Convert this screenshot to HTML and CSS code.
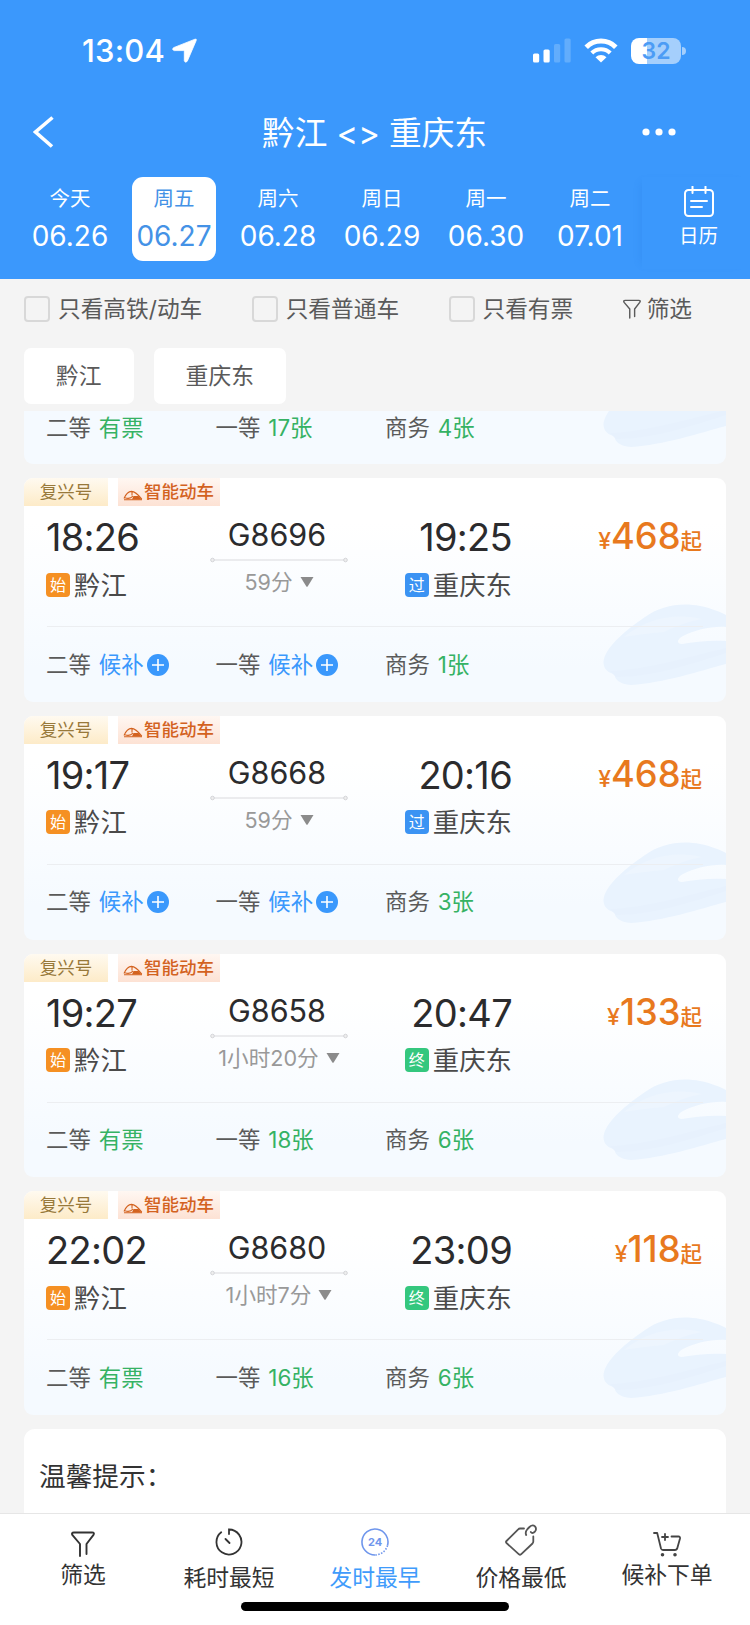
FILE: index.html
```html
<!DOCTYPE html>
<html lang="zh-CN">
<head>
   <meta charset="UTF-8">
   <meta name="viewport" content="width=device-width, initial-scale=1.0">
   <title>黔江 - 重庆东</title>
   <link rel="stylesheet" href="styles.css">
</head>
<body>
   <!-- shared icons -->
   <svg class="icon-defs" width="0" height="0">
      <symbol id="train-bg" viewBox="0 0 124 84">
         <path d="M2 56C6 42 24 27 43 14C58 3 79 -1 98 3C109 5 118 9 124 12V24C109 23 93 27 81 33C75 36 74 41 80 41C93 39 108 37 124 38V61C98 68 61 80 29 82C16 81 12 75 13 71C4 70 0 63 2 56Z" fill="#e9f3fe"/>
         <path d="M22 34C42 17 70 9 100 16C88 18 74 23 62 29C48 30 34 32 22 34Z" fill="#edf5fe"/>
         <path d="M8 68C42 67 83 55 124 45V50C84 63 48 74 14 74Z" fill="#e7f1fd"/>
      </symbol>
      <symbol id="train" viewBox="0 0 20 12">
         <path d="M1 9.5C2.5 6 5 2.6 8.5 2.4C12.5 2.6 15.5 6 18.8 10M1 10.8H19M2 8.8C5 9.8 8 9.5 10 7M9 2.5V6.5" fill="none" stroke="currentColor" stroke-width="1.1"/>
         <path d="M10.5 7H15.5L18.8 10.5H9Z" fill="currentColor"/>
      </symbol>
      <symbol id="route" viewBox="0 0 138 6">
         <path d="M4 3H134" stroke="#d9dadd" stroke-width="1.2"/>
         <circle cx="2.5" cy="3" r="1.8" fill="#eee" stroke="#d3d4d8" stroke-width="1"/>
         <circle cx="135.5" cy="3" r="1.8" fill="#eee" stroke="#d3d4d8" stroke-width="1"/>
      </symbol>
      <symbol id="down" viewBox="0 0 14 10">
         <path d="M0.5 0H13.5L7.8 9.2Q7 10.2 6.2 9.2Z" fill="#8b8b8b"/>
      </symbol>
      <symbol id="plus" viewBox="0 0 22 22">
         <circle cx="11" cy="11" r="11" fill="#3a98fc"/>
         <path d="M11 5V17M5 11H17" stroke="#fff" stroke-width="1.6"/>
      </symbol>
      <symbol id="funnel" viewBox="0 0 24 26">
         <path d="M9 25V13L1.5 4.2Q0 1.5 3 1.5H21Q24 1.5 22.3 4.2L15.5 13V23" fill="none" stroke="currentColor" stroke-width="1.9" stroke-linecap="round" stroke-linejoin="round"/>
      </symbol>
   </svg>

   <header>
      <div class="status-bar">
         <span class="clock">13:04</span>
         <svg class="location" width="25" height="25" viewBox="0 0 25 25">
            <path d="M23 1.2Q24.8 .6 24.2 2.5L15.3 23.2Q13.2 25.5 12.3 22.8V13.2Q12.3 12.6 11.6 12.6H2.2Q-.6 11.7 1.5 9.7Z" fill="#fff" stroke="#fff" stroke-width=".8"/>
         </svg>
         <svg class="signal" width="38" height="25" viewBox="0 0 38 25">
            <rect x="0" y="15.5" width="6.2" height="9" rx="1.6" fill="#fff"/>
            <rect x="10.5" y="11.5" width="6.2" height="13" rx="1.6" fill="#fff"/>
            <rect x="21" y="6" width="6.2" height="18.5" rx="1.6" fill="#62adfc"/>
            <rect x="31.5" y="0.5" width="6.2" height="24" rx="1.6" fill="#62adfc"/>
         </svg>
         <svg class="wifi" width="34" height="25" viewBox="0 0 34 25">
            <path d="M2.2 9.2A21 21 0 0 1 31.8 9.2" fill="none" stroke="#fff" stroke-width="5"/>
            <path d="M7.8 15A13.2 13.2 0 0 1 26.2 15" fill="none" stroke="#fff" stroke-width="4.2"/>
            <path d="M17 24.6L11.5 19.2A8 8 0 0 1 22.5 19.2Z" fill="#fff"/>
         </svg>
         <div class="battery"><span>32</span></div>
      </div>

      <div class="title-bar">
         <svg width="22" height="32" viewBox="0 0 22 32">
            <path d="M19.5 1.5L2.5 16L19 30.5" fill="none" stroke="#fff" stroke-width="3.6"/>
         </svg>
         <h1>黔江 &lt;&gt; 重庆东</h1>
         <svg width="34" height="8" viewBox="0 0 34 8">
            <circle cx="4" cy="4" r="3.6" fill="#fff"/>
            <circle cx="17" cy="4" r="3.6" fill="#fff"/>
            <circle cx="30" cy="4" r="3.6" fill="#fff"/>
         </svg>
      </div>

      <div class="dates">
         <div class="day"><span>今天</span><b>06.26</b></div>
         <div class="day active"><span>周五</span><b>06.27</b></div>
         <div class="day"><span>周六</span><b>06.28</b></div>
         <div class="day"><span>周日</span><b>06.29</b></div>
         <div class="day"><span>周一</span><b>06.30</b></div>
         <div class="day"><span>周二</span><b>07.01</b></div>
         <div class="calendar">
            <svg width="32" height="32" viewBox="0 0 32 32" fill="none" stroke="#fff" stroke-width="2">
               <rect x="2" y="4" width="28" height="26" rx="3.5"/>
               <path d="M9.5 0.5V7M22.5 0.5V7M8 15H24M8 21H19" stroke-linecap="round"/>
            </svg>
            <span>日历</span>
         </div>
      </div>
   </header>

   <div class="filters">
      <label class="check"><i></i>只看高铁/动车</label>
      <label class="check"><i></i>只看普通车</label>
      <label class="check"><i></i>只看有票</label>
      <div class="filter-link"><svg width="18" height="20"><use href="#funnel"/></svg>筛选</div>
   </div>

   <div class="chips">
      <div class="chip">黔江</div>
      <div class="chip">重庆东</div>
   </div>

   <main class="list">
      <section class="card card-cut">
         <svg class="train-bg" width="124" height="84"><use href="#train-bg"/></svg>
         <div class="seats">
            <div>二等<em>有票</em></div>
            <div>一等<em>17张</em></div>
            <div>商务<em>4张</em></div>
         </div>
      </section>

      <section class="card">
         <svg class="train-bg" width="124" height="84"><use href="#train-bg"/></svg>
         <div class="tags"><span class="tag gold">复兴号</span><span class="tag smart"><svg width="20" height="12"><use href="#train"/></svg>智能动车</span></div>
         <div class="trip">
            <div class="from"><div class="time">18:26</div><div class="station"><i class="mark start">始</i>黔江</div></div>
            <div class="train"><div class="number">G8696</div><svg width="138" height="6"><use href="#route"/></svg><div class="duration">59分<svg width="14" height="10"><use href="#down"/></svg></div></div>
            <div class="to"><div class="time">19:25</div><div class="station"><i class="mark pass">过</i>重庆东</div></div>
            <div class="price"><small>¥</small><b>468</b><span>起</span></div>
         </div>
         <div class="seats">
            <div class="wait">二等<em>候补</em><svg width="22" height="22"><use href="#plus"/></svg></div>
            <div class="wait">一等<em>候补</em><svg width="22" height="22"><use href="#plus"/></svg></div>
            <div>商务<em>1张</em></div>
         </div>
      </section>

      <section class="card">
         <svg class="train-bg" width="124" height="84"><use href="#train-bg"/></svg>
         <div class="tags"><span class="tag gold">复兴号</span><span class="tag smart"><svg width="20" height="12"><use href="#train"/></svg>智能动车</span></div>
         <div class="trip">
            <div class="from"><div class="time">19:17</div><div class="station"><i class="mark start">始</i>黔江</div></div>
            <div class="train"><div class="number">G8668</div><svg width="138" height="6"><use href="#route"/></svg><div class="duration">59分<svg width="14" height="10"><use href="#down"/></svg></div></div>
            <div class="to"><div class="time">20:16</div><div class="station"><i class="mark pass">过</i>重庆东</div></div>
            <div class="price"><small>¥</small><b>468</b><span>起</span></div>
         </div>
         <div class="seats">
            <div class="wait">二等<em>候补</em><svg width="22" height="22"><use href="#plus"/></svg></div>
            <div class="wait">一等<em>候补</em><svg width="22" height="22"><use href="#plus"/></svg></div>
            <div>商务<em>3张</em></div>
         </div>
      </section>

      <section class="card">
         <svg class="train-bg" width="124" height="84"><use href="#train-bg"/></svg>
         <div class="tags"><span class="tag gold">复兴号</span><span class="tag smart"><svg width="20" height="12"><use href="#train"/></svg>智能动车</span></div>
         <div class="trip">
            <div class="from"><div class="time">19:27</div><div class="station"><i class="mark start">始</i>黔江</div></div>
            <div class="train"><div class="number">G8658</div><svg width="138" height="6"><use href="#route"/></svg><div class="duration">1小时20分<svg width="14" height="10"><use href="#down"/></svg></div></div>
            <div class="to"><div class="time">20:47</div><div class="station"><i class="mark end">终</i>重庆东</div></div>
            <div class="price"><small>¥</small><b>133</b><span>起</span></div>
         </div>
         <div class="seats">
            <div>二等<em>有票</em></div>
            <div>一等<em>18张</em></div>
            <div>商务<em>6张</em></div>
         </div>
      </section>

      <section class="card">
         <svg class="train-bg" width="124" height="84"><use href="#train-bg"/></svg>
         <div class="tags"><span class="tag gold">复兴号</span><span class="tag smart"><svg width="20" height="12"><use href="#train"/></svg>智能动车</span></div>
         <div class="trip">
            <div class="from"><div class="time">22:02</div><div class="station"><i class="mark start">始</i>黔江</div></div>
            <div class="train"><div class="number">G8680</div><svg width="138" height="6"><use href="#route"/></svg><div class="duration">1小时7分<svg width="14" height="10"><use href="#down"/></svg></div></div>
            <div class="to"><div class="time">23:09</div><div class="station"><i class="mark end">终</i>重庆东</div></div>
            <div class="price"><small>¥</small><b>118</b><span>起</span></div>
         </div>
         <div class="seats">
            <div>二等<em>有票</em></div>
            <div>一等<em>16张</em></div>
            <div>商务<em>6张</em></div>
         </div>
      </section>

      <section class="tips">温馨提示：</section>
   </main>

   <footer>
      <nav class="tabs">
         <div class="tab short">
            <svg width="24" height="26"><use href="#funnel"/></svg>
            <span>筛选</span>
         </div>
         <div class="tab">
            <svg width="28" height="28" viewBox="0 0 28 28" fill="none" stroke="currentColor" stroke-width="1.8">
               <path d="M14 6V1.5A12.5 12.5 0 1 1 6.2 4.2M10.5 11L14.5 15" stroke-linecap="round"/>
            </svg>
            <span>耗时最短</span>
         </div>
         <div class="tab active">
            <svg width="28" height="28" viewBox="0 0 28 28" fill="none" stroke="#6f96ec" stroke-width="1.6">
               <path d="M14 27A13 13 0 1 1 26.5 17.5"/>
               <path d="M26.5 17.5A13 13 0 0 1 14 27" stroke-dasharray="1.5 1.5"/>
               <text x="14" y="18" text-anchor="middle">24</text>
            </svg>
            <span>发时最早</span>
         </div>
         <div class="tab">
            <svg width="32" height="32" viewBox="0 0 32 32" fill="none" stroke="#555" stroke-width="1.8" stroke-linecap="round" stroke-linejoin="round">
               <path d="M19 4.5H15Q14 4.5 13.2 5.4L1.5 17Q.5 18 1.5 19L14 30.3Q15 31.1 16 30.3L27.5 19.5Q28.3 18.6 28.3 17.5V12.5"/>
               <path d="M21.2 11Q19.8 8 22.5 5L24.5 3Q27.5 .2 30 2.4Q32 5 30 7.5L28.5 8.7Q26.8 9.5 25.8 8"/>
            </svg>
            <span>价格最低</span>
         </div>
         <div class="tab short">
            <svg width="28" height="26" viewBox="0 0 28 26" fill="none" stroke="#444" stroke-width="1.8" stroke-linecap="round" stroke-linejoin="round">
               <path d="M1 2H4.2L8 17.5Q8.5 19 10 19H22Q23.5 19 24.2 17.5L27 7.5Q27.3 5.5 25.5 5.5H18.5M12 3V9M9 6H15"/>
               <circle cx="9.5" cy="23.7" r="0.9" fill="#444"/>
               <circle cx="22" cy="23.7" r="0.9" fill="#444"/>
            </svg>
            <span>候补下单</span>
         </div>
      </nav>
      <div class="home-bar"></div>
   </footer>
</body>
</html>
```
FILE: styles.css
```css
* {
   box-sizing: border-box;
}

body {
   margin: 0;
   width: 750px;
   height: 1625px;
   overflow: hidden;
   display: flex;
   flex-direction: column;
   background-color: #f4f4f4;
   font-family: Inter, "Noto Sans CJK SC", sans-serif;
   color: #5a5a5a;
}

svg {
   display: block;
   flex-shrink: 0;
}

.icon-defs {
   position: absolute;
}

i, em {
   font-style: normal;
}

header {
   height: 279px;
   flex-shrink: 0;
   background-color: #3b98fc;
   color: #fff;
}

/* Status bar */
.status-bar {
   height: 100px;
   padding: 1px 64px 0 82px;
   display: flex;
   align-items: center;
}

.clock {
   width: 84px;
   font-size: 31px;
   font-weight: 500;
   letter-spacing: 0.2px;
}

.location {
   margin-left: 6px;
}

.signal {
   margin-left: auto;
}

.wifi {
   margin: 0 13px;
}

.battery {
   position: relative;
   width: 50px;
   height: 26px;
   margin-right: 5px;
   border-radius: 8px;
   background: linear-gradient(90deg, #fff 16px, #a5cffc 16px);
   color: #4c9cf5;
   font-size: 23px;
   font-weight: 600;
   line-height: 26px;
   text-align: center;
}

.battery::after {
   content: "";
   position: absolute;
   right: -5px;
   top: 9px;
   width: 4px;
   height: 8px;
   border-radius: 0 4px 4px 0;
   background-color: #a5cffc;
}

/* Title */
.title-bar {
   height: 64px;
   padding: 0 74px 0 33px;
   display: flex;
   align-items: center;
   justify-content: space-between;
}

.title-bar h1 {
   margin: 2px 0 0 52px;
   font-size: 32.7px;
   font-weight: 400;
   line-height: 40px;
}

/* Dates */
.dates {
   height: 115px;
   padding: 13px 0 0 18px;
   display: flex;
}

.day {
   width: 84px;
   height: 84px;
   margin: 0 10px;
   padding-top: 8px;
   border-radius: 11px;
   display: flex;
   flex-direction: column;
   align-items: center;
}

.day span {
   font-size: 20.5px;
   line-height: 28px;
}

.day b {
   margin-top: 6px;
   font-size: 28px;
   font-weight: 400;
   line-height: 34px;
}

.day.active {
   background-color: #fff;
   color: #4492e6;
}

.calendar {
   width: 108px;
   height: 92px;
   padding: 9px 0 0 5px;
   display: flex;
   flex-direction: column;
   align-items: center;
   box-shadow: -6px 0 8px -6px rgba(30, 110, 210, 0.22);
}

.calendar span {
   margin-top: 5px;
   font-size: 19.5px;
   line-height: 26px;
}

/* Filters */
.filters {
   height: 58px;
   flex-shrink: 0;
   padding: 1px 58px 0 24px;
   display: flex;
   align-items: center;
   justify-content: space-between;
   font-size: 22.7px;
   line-height: 30px;
}

.check,
.filter-link {
   display: flex;
   align-items: center;
}

.check i {
   width: 26px;
   height: 26px;
   margin-right: 8px;
   border: 2px solid #d8d8d8;
   border-radius: 4px;
}

.filter-link svg {
   margin-right: 6px;
}

.chips {
   height: 74px;
   flex-shrink: 0;
   padding: 11px 24px 0;
   display: flex;
   gap: 20px;
}

.chip {
   height: 56px;
   padding: 0 32px;
   border-radius: 7px;
   background-color: #fff;
   font-size: 22.8px;
   line-height: 56px;
}

/* Train list */
.list {
   height: 1102px;
   flex-shrink: 0;
   padding: 0 24px;
   display: flex;
   flex-direction: column;
   gap: 14px;
   overflow: hidden;
}

.card {
   position: relative;
   height: 223.75px;
   flex-shrink: 0;
   border-radius: 9px;
   background: linear-gradient(#fff 20%, #f5faff 85%);
   overflow: hidden;
}

.card-cut {
   height: 53px;
   border-radius: 0 0 9px 9px;
   background: #f5faff;
   display: flex;
   flex-direction: column;
   justify-content: flex-end;
}

/* train picture in the corner, under the text */
.train-bg {
   position: absolute;
   right: 0;
   bottom: 15px;
}

.tags {
   height: 28px;
   display: flex;
   gap: 10px;
}

.tag {
   display: flex;
   align-items: center;
   font-size: 17.5px;
   line-height: 28px;
}

.gold {
   width: 84px;
   justify-content: center;
   background: linear-gradient(#fffaf0, #fdebc8);
   color: #98793a;
}

.smart {
   width: 102px;
   padding-left: 5px;
   background: linear-gradient(#fff7f2, #fde2d4);
   color: #d3621f;
   font-weight: 500;
}

.smart svg {
   margin: 5px 1px 0 0;
}

.trip {
   position: relative;
   height: 121px;
   margin: 0 23px;
   padding-top: 7px;
   display: grid;
   grid-template-columns: 163px 138px 164px 1fr;
   border-bottom: 1px solid #eceef1;
}

.time {
   height: 48px;
   margin-left: -1px;
   font-size: 38px;
   font-weight: 400;
   line-height: 48px;
   letter-spacing: -0.7px;
   color: #2b2b2d;
}

.station {
   height: 47px;
   margin-left: -1px;
   display: flex;
   align-items: center;
   font-size: 26.4px;
   line-height: 34px;
   color: #4a4a4a;
}

.mark {
   width: 24px;
   height: 24px;
   margin-right: 4px;
   border-radius: 4px;
   font-size: 16px;
   line-height: 24px;
   text-align: center;
   color: #fff;
}

.start {
   background-color: #f59023;
}

.pass {
   background-color: #3b93f3;
}

.end {
   background-color: #34c77e;
}

.train {
   display: flex;
   flex-direction: column;
   align-items: center;
}

.number {
   height: 44px;
   margin-left: -4px;
   font-size: 30.5px;
   font-weight: 400;
   line-height: 43px;
   color: #2b2b2d;
}

.duration {
   height: 34px;
   margin-top: 2px;
   display: flex;
   align-items: center;
   gap: 7px;
   font-size: 21.6px;
   line-height: 30px;
   color: #999;
}

.to {
   display: flex;
   flex-direction: column;
   align-items: flex-end;
}

.price {
   height: 48px;
   padding-right: 1px;
   display: flex;
   justify-content: flex-end;
   align-items: baseline;
   line-height: 46px;
   color: #e8791e;
}

.price small {
   font-size: 23px;
   font-weight: 500;
}

.price b {
   font-size: 36.3px;
   font-weight: 500;
}

.price span {
   font-size: 21.5px;
   font-weight: 500;
}

.seats {
   height: 74px;
   flex-shrink: 0;
   margin-left: 22px;
   padding-top: 1px;
   display: grid;
   grid-template-columns: 169.5px 169.5px 1fr;
   align-items: center;
   font-size: 22.4px;
   line-height: 30px;
}

.seats div {
   display: flex;
   align-items: center;
}

.seats em {
   margin-left: 8px;
   color: #35b264;
}

.seats .wait em {
   color: #3a98fc;
}

.seats svg {
   margin-left: 3px;
}

.tips {
   height: 120px;
   flex-shrink: 0;
   padding: 29px 15px;
   border-radius: 11px 11px 0 0;
   background-color: #fff;
   font-size: 26.7px;
   line-height: 36px;
   color: #333;
}

/* Bottom bar */
footer {
   height: 112px;
   flex-shrink: 0;
   border-top: 1px solid #e6e6e6;
   background-color: #fff;
}

.tabs {
   height: 88px;
   padding: 0 10px;
   display: flex;
}

.tab {
   width: 146px;
   display: flex;
   flex-direction: column;
   align-items: center;
   justify-content: flex-end;
   padding-bottom: 9px;
   color: #333;
   font-size: 22.8px;
   line-height: 30px;
}

.tab span {
   margin-top: 7px;
}

.tab.short {
   padding-bottom: 12px;
}

.tab.short span {
   margin-top: 3px;
}

.tab text {
   fill: #6f96ec;
   stroke: none;
   font-size: 11px;
   font-weight: 700;
}

.tab.active {
   color: #3f9bfb;
}

.home-bar {
   width: 268px;
   height: 9px;
   margin: 0 auto;
   border-radius: 5px;
   background-color: #000;
}
```
